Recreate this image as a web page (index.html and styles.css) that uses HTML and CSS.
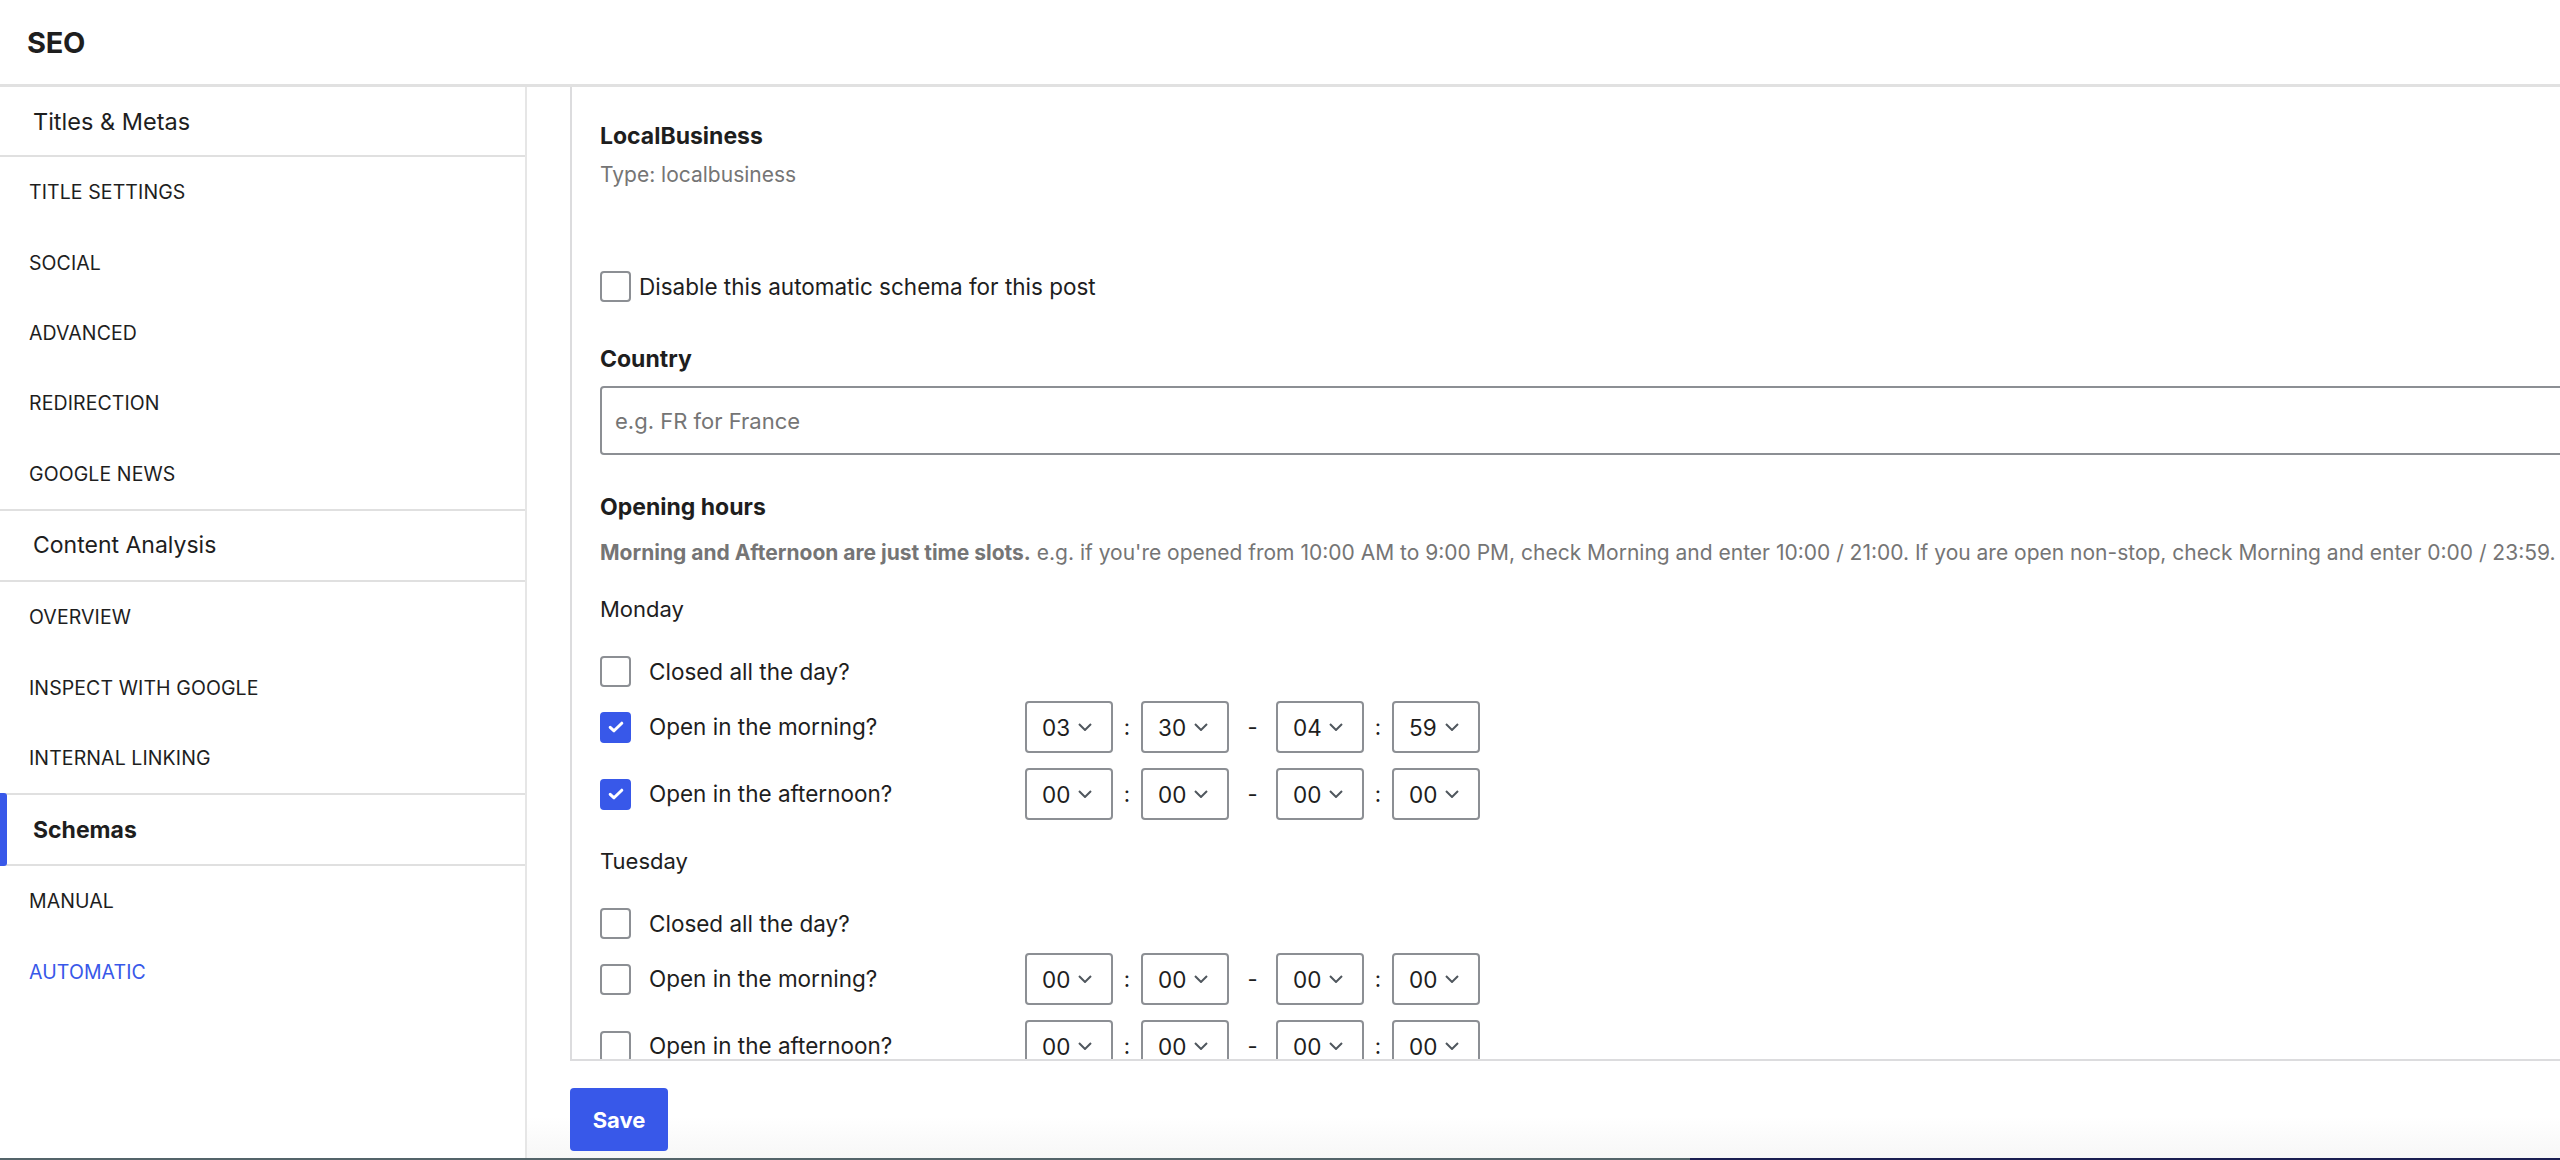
FILE: index.html
```html
<!DOCTYPE html>
<html lang="en">
<head>
<meta charset="utf-8">
<title>SEO</title>
<link rel="stylesheet" href="styles.css">
</head>
<body>
<div class="app">
  <header class="topbar">
    <h1 class="topbar-title">SEO</h1>
  </header>

  <div class="workspace">
    <nav class="sidebar">
      <div class="nav-group nav-group--first">Titles &amp; Metas</div>
      <a class="nav-item">TITLE SETTINGS</a>
      <a class="nav-item">SOCIAL</a>
      <a class="nav-item">ADVANCED</a>
      <a class="nav-item">REDIRECTION</a>
      <a class="nav-item">GOOGLE NEWS</a>

      <div class="nav-group">Content Analysis</div>
      <a class="nav-item">OVERVIEW</a>
      <a class="nav-item">INSPECT WITH GOOGLE</a>
      <a class="nav-item">INTERNAL LINKING</a>

      <div class="nav-group nav-group--active">Schemas</div>
      <a class="nav-item">MANUAL</a>
      <a class="nav-item nav-item--current">AUTOMATIC</a>
    </nav>

    <main class="main">
      <section class="panel">
        <div class="panel-body">
          <h2 class="schema-name">LocalBusiness</h2>
          <p class="schema-type">Type: localbusiness</p>

          <label class="check-row check-row--disable">
            <span class="checkbox"></span>
            <span class="check-text">Disable this automatic schema for this post</span>
          </label>

          <h3 class="field-label field-label--country">Country</h3>
          <div class="text-input"><span class="placeholder">e.g. FR for France</span></div>

          <h3 class="field-label field-label--hours">Opening hours</h3>
          <p class="hint"><strong>Morning and Afternoon are just time slots.</strong> e.g. if you're opened from 10:00 AM to 9:00 PM, check Morning and enter 10:00 / 21:00. If you are open non-stop, check Morning and enter 0:00 / 23:59.</p>

          <div class="day">
            <div class="day-name">Monday</div>
            <div class="slot-row slot-row--closed">
              <label class="slot-label"><span class="checkbox"></span><span class="check-text">Closed all the day?</span></label>
            </div>
            <div class="slot-row">
              <label class="slot-label"><span class="checkbox checkbox--on"><svg viewBox="0 0 16 12" width="16" height="12"><path d="M2.2 6.3l3.8 3.5L13.8 2.2" fill="none" stroke="#fff" stroke-width="3" stroke-linecap="round" stroke-linejoin="round"/></svg></span><span class="check-text">Open in the morning?</span></label>
              <div class="time-select"><span>03</span><svg viewBox="0 0 14 8" width="14" height="8"><path d="M1 1l6 6 6-6" fill="none" stroke="#50575e" stroke-width="2"/></svg></div>
              <span class="sep">:</span>
              <div class="time-select"><span>30</span><svg viewBox="0 0 14 8" width="14" height="8"><path d="M1 1l6 6 6-6" fill="none" stroke="#50575e" stroke-width="2"/></svg></div>
              <span class="sep sep--dash">-</span>
              <div class="time-select"><span>04</span><svg viewBox="0 0 14 8" width="14" height="8"><path d="M1 1l6 6 6-6" fill="none" stroke="#50575e" stroke-width="2"/></svg></div>
              <span class="sep">:</span>
              <div class="time-select"><span>59</span><svg viewBox="0 0 14 8" width="14" height="8"><path d="M1 1l6 6 6-6" fill="none" stroke="#50575e" stroke-width="2"/></svg></div>
            </div>
            <div class="slot-row slot-row--last">
              <label class="slot-label"><span class="checkbox checkbox--on"><svg viewBox="0 0 16 12" width="16" height="12"><path d="M2.2 6.3l3.8 3.5L13.8 2.2" fill="none" stroke="#fff" stroke-width="3" stroke-linecap="round" stroke-linejoin="round"/></svg></span><span class="check-text">Open in the afternoon?</span></label>
              <div class="time-select"><span>00</span><svg viewBox="0 0 14 8" width="14" height="8"><path d="M1 1l6 6 6-6" fill="none" stroke="#50575e" stroke-width="2"/></svg></div>
              <span class="sep">:</span>
              <div class="time-select"><span>00</span><svg viewBox="0 0 14 8" width="14" height="8"><path d="M1 1l6 6 6-6" fill="none" stroke="#50575e" stroke-width="2"/></svg></div>
              <span class="sep sep--dash">-</span>
              <div class="time-select"><span>00</span><svg viewBox="0 0 14 8" width="14" height="8"><path d="M1 1l6 6 6-6" fill="none" stroke="#50575e" stroke-width="2"/></svg></div>
              <span class="sep">:</span>
              <div class="time-select"><span>00</span><svg viewBox="0 0 14 8" width="14" height="8"><path d="M1 1l6 6 6-6" fill="none" stroke="#50575e" stroke-width="2"/></svg></div>
            </div>
          </div>

          <div class="day">
            <div class="day-name">Tuesday</div>
            <div class="slot-row slot-row--closed">
              <label class="slot-label"><span class="checkbox"></span><span class="check-text">Closed all the day?</span></label>
            </div>
            <div class="slot-row">
              <label class="slot-label"><span class="checkbox"></span><span class="check-text">Open in the morning?</span></label>
              <div class="time-select"><span>00</span><svg viewBox="0 0 14 8" width="14" height="8"><path d="M1 1l6 6 6-6" fill="none" stroke="#50575e" stroke-width="2"/></svg></div>
              <span class="sep">:</span>
              <div class="time-select"><span>00</span><svg viewBox="0 0 14 8" width="14" height="8"><path d="M1 1l6 6 6-6" fill="none" stroke="#50575e" stroke-width="2"/></svg></div>
              <span class="sep sep--dash">-</span>
              <div class="time-select"><span>00</span><svg viewBox="0 0 14 8" width="14" height="8"><path d="M1 1l6 6 6-6" fill="none" stroke="#50575e" stroke-width="2"/></svg></div>
              <span class="sep">:</span>
              <div class="time-select"><span>00</span><svg viewBox="0 0 14 8" width="14" height="8"><path d="M1 1l6 6 6-6" fill="none" stroke="#50575e" stroke-width="2"/></svg></div>
            </div>
            <div class="slot-row slot-row--last">
              <label class="slot-label"><span class="checkbox"></span><span class="check-text">Open in the afternoon?</span></label>
              <div class="time-select"><span>00</span><svg viewBox="0 0 14 8" width="14" height="8"><path d="M1 1l6 6 6-6" fill="none" stroke="#50575e" stroke-width="2"/></svg></div>
              <span class="sep">:</span>
              <div class="time-select"><span>00</span><svg viewBox="0 0 14 8" width="14" height="8"><path d="M1 1l6 6 6-6" fill="none" stroke="#50575e" stroke-width="2"/></svg></div>
              <span class="sep sep--dash">-</span>
              <div class="time-select"><span>00</span><svg viewBox="0 0 14 8" width="14" height="8"><path d="M1 1l6 6 6-6" fill="none" stroke="#50575e" stroke-width="2"/></svg></div>
              <span class="sep">:</span>
              <div class="time-select"><span>00</span><svg viewBox="0 0 14 8" width="14" height="8"><path d="M1 1l6 6 6-6" fill="none" stroke="#50575e" stroke-width="2"/></svg></div>
            </div>
          </div>
        </div>
      </section>

      <div class="actions">
        <button class="btn-save" type="button">Save</button>
      </div>
    </main>
  </div>

  <div class="screen-edge"></div>
</div>
</body>
</html>
```

FILE: styles.css
```css
* {
  box-sizing: border-box;
}

html,
body {
  margin: 0;
  height: 100%;
  overflow: hidden;
  background: #fff;
}

body {
  font-family: Inter, "Noto Sans", "Liberation Sans", sans-serif;
  color: #1e1e1e;
}

.app {
  display: flex;
  flex-direction: column;
  height: 100vh;
}

/* Top title bar */
.topbar {
  flex: 0 0 auto;
  height: 87px;
  border-bottom: 3px solid #e1e1e1;
  display: flex;
  align-items: center;
  padding-left: 27px;
}

.topbar-title {
  margin: 0;
  font-size: 29px;
  font-weight: 700;
  line-height: 1;
  letter-spacing: -0.3px;
}

.workspace {
  flex: 1 1 auto;
  min-height: 0;
  display: flex;
}

/* Left navigation */
.sidebar {
  flex: 0 0 527px;
  border-right: 2px solid #e6e6e6;
  display: flex;
  flex-direction: column;
}

.nav-group {
  position: relative;
  height: 73px;
  border-top: 2px solid #e0e0e0;
  border-bottom: 2px solid #e0e0e0;
  display: flex;
  align-items: center;
  padding-left: 33px;
  font-size: 23px;
  color: #1e1e1e;
}

.nav-group--first {
  height: 70px;
  border-top: 0;
  font-size: 23.5px;
}

.nav-group--active {
  font-weight: 700;
}

.nav-group--active::before {
  content: "";
  position: absolute;
  left: 0;
  top: -2px;
  bottom: -2px;
  width: 7px;
  background: #3858e9;
  border-radius: 0 3px 3px 0;
}

.nav-item {
  height: 70.4px;
  display: flex;
  align-items: center;
  padding-left: 29px;
  font-size: 19.5px;
  color: #1e1e1e;
  text-decoration: none;
  letter-spacing: 0.1px;
}

.nav-item--current {
  color: #3858e9;
}

/* Main column */
.main {
  flex: 1 1 auto;
  min-width: 0;
  display: flex;
  flex-direction: column;
  padding-left: 43px;
  overflow: hidden;
  background: linear-gradient(to bottom, #fff 0, #fff 1030px, #f7f7f7 100%);
}

.panel {
  flex: 1 1 auto;
  min-height: 0;
  width: 2200px;
  border-left: 2px solid #dcdcde;
  border-bottom: 2px solid #dcdcde;
  background: #fff;
  overflow: hidden;
}

.panel-body {
  padding: 34px 0 0 28px;
}

.schema-name {
  margin: 0;
  font-size: 23px;
  line-height: 30px;
  font-weight: 700;
}

.schema-type {
  margin: 10px 0 0;
  font-size: 21px;
  line-height: 28px;
  color: #757575;
}

/* Checkboxes */
.check-row {
  display: flex;
  align-items: center;
}

.check-row--disable {
  margin-top: 82px;
  gap: 8px;
}

.checkbox {
  flex: 0 0 auto;
  width: 31px;
  height: 31px;
  border: 2px solid #8c8f94;
  border-radius: 4px;
  background: #fff;
  display: flex;
  align-items: center;
  justify-content: center;
}

.checkbox--on {
  background: #3858e9;
  border-color: #3858e9;
}

.checkbox svg {
  display: block;
}

.check-text {
  font-size: 22.5px;
  line-height: 30px;
  white-space: nowrap;
}

.field-label {
  margin: 0;
  font-size: 23px;
  line-height: 30px;
  font-weight: 700;
}

.field-label--country {
  margin-top: 42px;
}

.field-label--hours {
  margin-top: 37px;
}

.text-input {
  margin-top: 12px;
  width: 2100px;
  height: 69px;
  border: 2px solid #8c8f94;
  border-radius: 4px;
  display: flex;
  align-items: center;
  padding-left: 13px;
}

.placeholder {
  font-size: 22px;
  color: #757575;
}

.hint {
  margin: 17px 0 0;
  font-size: 21px;
  line-height: 28px;
  color: #757575;
  white-space: nowrap;
}

.hint strong {
  font-weight: 700;
}

/* Opening hours per day */
.day {
  margin-top: 27px;
}

.day + .day {
  margin-top: 26px;
}

.day-name {
  font-size: 22px;
  line-height: 30px;
}

.slot-row {
  display: flex;
  align-items: center;
  margin-top: 14px;
}

.slot-row--closed {
  margin-top: 32px;
}

.slot-row--last {
  margin-top: 15px;
}

.slot-label {
  flex: 0 0 425px;
  display: flex;
  align-items: center;
  gap: 18px;
}

.time-select {
  flex: 0 0 auto;
  width: 88px;
  height: 52px;
  border: 2px solid #8c8f94;
  border-radius: 4px;
  display: flex;
  align-items: center;
  justify-content: space-between;
  padding: 0 19px 0 15px;
  font-size: 22.5px;
}

.time-select svg {
  display: block;
}

.sep {
  flex: 0 0 28px;
  text-align: center;
  font-size: 22px;
}

.sep--dash {
  flex-basis: 47px;
}

/* Save bar */
.actions {
  flex: 0 0 97px;
  padding-top: 27px;
}

.btn-save {
  width: 98px;
  height: 63px;
  border: 0;
  border-radius: 4px;
  background: #3858e9;
  color: #fff;
  font-family: inherit;
  font-size: 22px;
  font-weight: 700;
  padding: 0;
}

.screen-edge {
  flex: 0 0 2px;
  background: linear-gradient(to right, #54646a 0, #54646a 66%, #1b1f52 66%, #1b1f52 100%);
}
```
